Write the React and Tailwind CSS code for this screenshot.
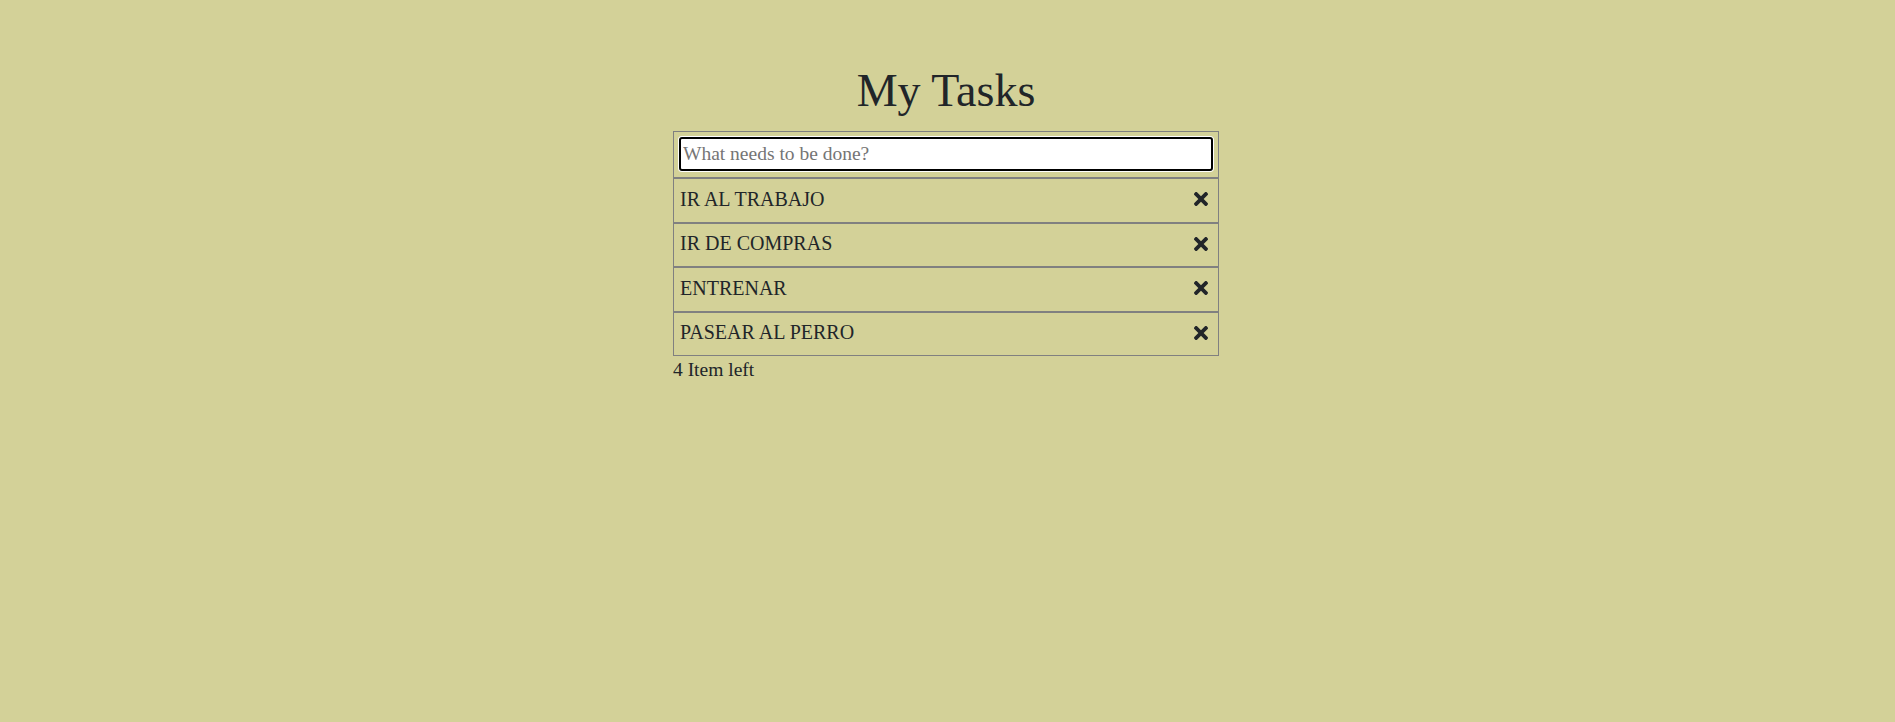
import React from "react";

const tasks = ["IR AL TRABAJO", "IR DE COMPRAS", "ENTRENAR", "PASEAR AL PERRO"];

function XIcon() {
  return (
    <svg width="14" height="14" viewBox="0 80 352 352" fill="currentColor" aria-hidden="true">
      <path d="M242.72 256l100.07-100.07c12.28-12.28 12.28-32.19 0-44.48l-22.24-22.24c-12.28-12.28-32.19-12.28-44.48 0L176 189.28 75.93 89.21c-12.28-12.28-32.19-12.28-44.48 0L9.21 111.45c-12.28 12.28-12.28 32.19 0 44.48L109.28 256 9.21 356.07c-12.28 12.28-12.28 32.19 0 44.48l22.24 22.24c12.28 12.28 32.2 12.28 44.48 0L176 322.72l100.07 100.07c12.28 12.28 32.2 12.28 44.48 0l22.24-22.24c12.28-12.28 12.28-32.19 0-44.48L242.72 256z" />
    </svg>
  );
}

export default function App() {
  return (
    <div
      className="min-h-[722px] w-full bg-[#d3d198] text-[#212529] pt-[63px] pr-[3px] flex flex-col items-center"
      style={{ fontFamily: '"Liberation Serif", "Times New Roman", serif' }}
    >
      <h1 className="text-[46px] leading-[55px] font-normal mb-[13px]">My Tasks</h1>
      <div className="w-[546px]">
        <ul>
          <li className="h-[47px] border border-[#808080] px-[5px] pt-[5px]">
            <input
              type="text"
              placeholder="What needs to be done?"
              className="w-[534px] h-[34px] border-2 border-black rounded-[3px] bg-white px-[2px] text-[19.5px] leading-[28px] text-[#212529] placeholder:text-[#757575] outline-none shadow-[0_0_0_1px_#ffffff]"
            />
          </li>
          {tasks.map((t) => (
            <li
              key={t}
              className="h-[44.5px] border border-[#808080] pl-[6px] pr-[10px] flex items-center justify-between"
            >
              <span className="text-[20px] leading-[28.5px] -mt-[3px]">{t}</span>
              <button className="text-[#212529] flex items-center -mt-[2px]">
                <XIcon />
              </button>
            </li>
          ))}
        </ul>
        <div className="text-[19.5px] leading-[28.5px]">4 Item left</div>
      </div>
    </div>
  );
}
